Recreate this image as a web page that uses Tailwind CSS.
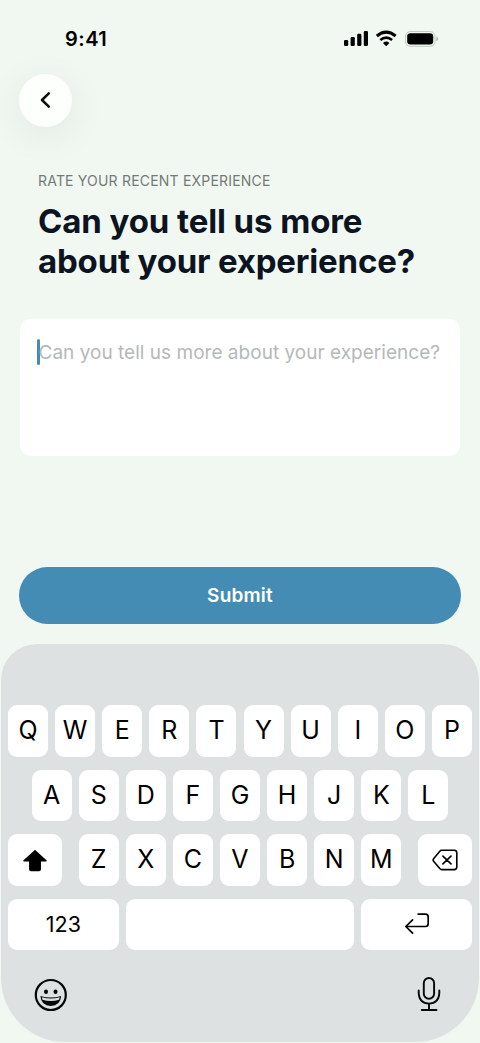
<!DOCTYPE html>
<html lang="en">
<head>
<meta charset="utf-8">
<meta name="viewport" content="width=device-width, initial-scale=1">
<title>Rate your experience</title>
<script src="https://cdn.jsdelivr.net/npm/@tailwindcss/browser@4"></script>
</head>
<body class="bg-[#f1f8f2]">
<div class="flex h-[1043px] w-[480px] flex-col overflow-hidden bg-[#f1f8f2] font-['Inter',sans-serif] text-black">
  <header class="flex h-[74px] shrink-0 justify-between pl-[65px] pr-[41px] pt-[26px]">
    <span class="text-[20px] leading-[26px] font-semibold tracking-[0.5px]">9:41</span>
    <svg class="mt-[3px]" width="96" height="20" viewBox="343 29 96 20">
      <rect x="344" y="40" width="4.2" height="6" rx="1.2"/>
      <rect x="350.6" y="37" width="4.2" height="9" rx="1.2"/>
      <rect x="357.2" y="33.8" width="4.2" height="12.2" rx="1.2"/>
      <rect x="363.8" y="31" width="4.2" height="15" rx="1.2"/>
      <path d="M376.8 36Q386.2 28.3 395.6 36" fill="none" stroke="#000" stroke-width="3"/>
      <path d="M380.3 40Q386.2 35.2 392.1 40" fill="none" stroke="#000" stroke-width="2.6"/>
      <path d="M383 43Q386.2 40.2 389.4 43L386.2 46.2Z"/>
      <rect x="405.5" y="31.5" width="29.5" height="14.8" rx="4.6" fill="none" stroke="#c3c9c4"/>
      <rect x="407.2" y="33.2" width="26" height="11.2" rx="3.2"/>
      <path d="M436.5 36.8v4.4q1.5-.6 1.5-2.2t-1.5-2.2" fill="#9fa5a0"/>
    </svg>
  </header>
  <main class="flex h-[570px] shrink-0 flex-col px-[19px]">
    <button class="flex size-[53px] items-center justify-center rounded-full bg-[#fdfffd] shadow-[0_8px_40px_rgba(0,0,0,0.07)]" aria-label="Back">
      <svg class="-mt-px" width="20" height="20" viewBox="0 0 20 20" fill="none" stroke="#0b0f12" stroke-width="2.6" stroke-linecap="round" stroke-linejoin="round"><path d="M12.8 3.4 6 10l6.8 6.6"/></svg>
    </button>
    <p class="mt-[44px] ml-[19px] text-[14px] leading-[20px] tracking-[0.2px] whitespace-nowrap text-[#747a78]">RATE YOUR RECENT EXPERIENCE</p>
    <h1 class="mt-[11px] ml-[19px] text-[33px] leading-[39.5px] font-bold whitespace-nowrap text-[#0c1422]"><span class="tracking-[-0.1px]">Can you tell us more</span><br><span class="tracking-[-0.18px]">about your experience?</span></h1>
    <div class="mt-[38px] ml-[1px] flex h-[137px] w-[440px] shrink-0 rounded-[11px] bg-white pt-[19.5px] pl-[17px]">
      <span class="h-[26px] w-[2.5px] shrink-0 rounded-full bg-[#448cb2]"></span>
      <span class="-ml-[1px] mt-px text-[19px] leading-[26px] tracking-[0.02px] whitespace-nowrap text-[#b5b9b9]">Can you tell us more about your experience?</span>
    </div>
    <button class="mt-[111px] h-[57px] w-[442px] shrink-0 rounded-full bg-[#448cb4] pt-px text-[19px] leading-[56px] font-semibold tracking-[0.2px] text-white">Submit</button>
  </main>
  <section class="mx-px flex h-[398px] shrink-0 flex-col rounded-t-[36px] rounded-b-[64px] bg-[#dde1e1] px-[7px] pt-[61px]">
    <div class="flex flex-col gap-[13px] text-[25px] leading-[51.5px] text-center *:h-[51.5px]">
      <div class="grid grid-cols-10 gap-[7.1px] *:rounded-[9px] *:bg-white *:h-[51.5px]">
        <span>Q</span><span>W</span><span>E</span><span>R</span><span>T</span><span>Y</span><span>U</span><span>I</span><span>O</span><span>P</span>
      </div>
      <div class="grid grid-cols-9 gap-[7.1px] px-[23.55px] *:rounded-[9px] *:bg-white *:h-[51.5px]">
        <span>A</span><span>S</span><span>D</span><span>F</span><span>G</span><span>H</span><span>J</span><span>K</span><span>L</span>
      </div>
      <div class="flex justify-between">
        <span class="flex w-[54px] items-center justify-center rounded-[9px] bg-white"><svg class="-ml-px mt-[1px]" width="26" height="24" viewBox="0 0 26 24"><path d="M13 2.7 24 12.8H18.2V21.2Q18.2 22.4 17 22.4H9Q7.8 22.4 7.8 21.2V12.8H2Z" stroke="#000" stroke-width="1.5" stroke-linejoin="round"/></svg></span>
        <div class="grid w-[322.8px] grid-cols-7 gap-[7.1px] *:rounded-[9px] *:bg-white *:h-[51.5px]">
          <span>Z</span><span>X</span><span>C</span><span>V</span><span>B</span><span>N</span><span>M</span>
        </div>
        <span class="flex w-[54px] items-center justify-center rounded-[9px] bg-white"><svg class="mt-px" width="26" height="24" viewBox="0 0 26 24" fill="none" stroke="#000" stroke-width="1.6" stroke-linecap="round" stroke-linejoin="round"><path d="M9.6 2.3H22.2Q24.8 2.3 24.8 4.9V19Q24.8 21.6 22.2 21.6H9.8Q8.8 21.6 8 20.8L1.8 13.5Q.5 12 1.8 10.5L8 3.1Q8.6 2.3 9.6 2.3M10.9 8.1 19 15.9M19 8.1 10.9 15.9"/></svg></span>
      </div>
      <div class="flex gap-[7.1px] *:rounded-[9px] *:bg-white">
        <span class="w-[110.8px] text-[21.5px] leading-[50.5px]">123</span>
        <span class="flex-1"></span>
        <span class="flex w-[110.8px] items-center justify-center"><svg width="26" height="24" viewBox="0 0 26 24" fill="none" stroke="#000" stroke-width="1.7" stroke-linecap="round" stroke-linejoin="round"><path d="M14.2 2.2H21.5Q24.2 2.2 24.2 4.9V11.8Q24.2 14.5 21.5 14.5H2M8.6 7.8 1.8 14.5 8.6 21.2"/></svg></span>
      </div>
    </div>
    <div class="flex justify-between px-[26px] pt-[28px]">
      <svg width="34" height="34" viewBox="34 978 34 34" fill="none" stroke="#050808"><circle cx="50.8" cy="995" r="15" stroke-width="2.2"/><ellipse cx="46" cy="991.7" rx="2" ry="2.2" fill="#050808" stroke="none"/><ellipse cx="55.5" cy="991.7" rx="2" ry="2.2" fill="#050808" stroke="none"/><path d="M40.4 996Q50.8 999 61.2 996Q60.4 1005.8 50.8 1006Q41.2 1005.8 40.4 996Z" fill="#050808" stroke="none"/><path d="M41.8 997.2Q50.8 999.6 59.8 997.2L59.1 999.8Q50.8 1002.2 42.5 999.8Z" fill="#dde1e1" stroke="none"/></svg>
      <svg class="-mt-[2px] mr-[5px]" width="24" height="36" viewBox="417 976 24 36" fill="none" stroke="#050808" stroke-width="1.9" stroke-linecap="round"><rect x="423.8" y="978" width="10.3" height="20.8" rx="5.15"/><path d="M418.7 990.5V993.2Q419.3 1003.4 429 1003.6Q438.7 1003.4 439.3 993.2V990.5M429 1003.8V1010M421.8 1010H436.5"/></svg>
    </div>
  </section>
</div>
</body>
</html>
